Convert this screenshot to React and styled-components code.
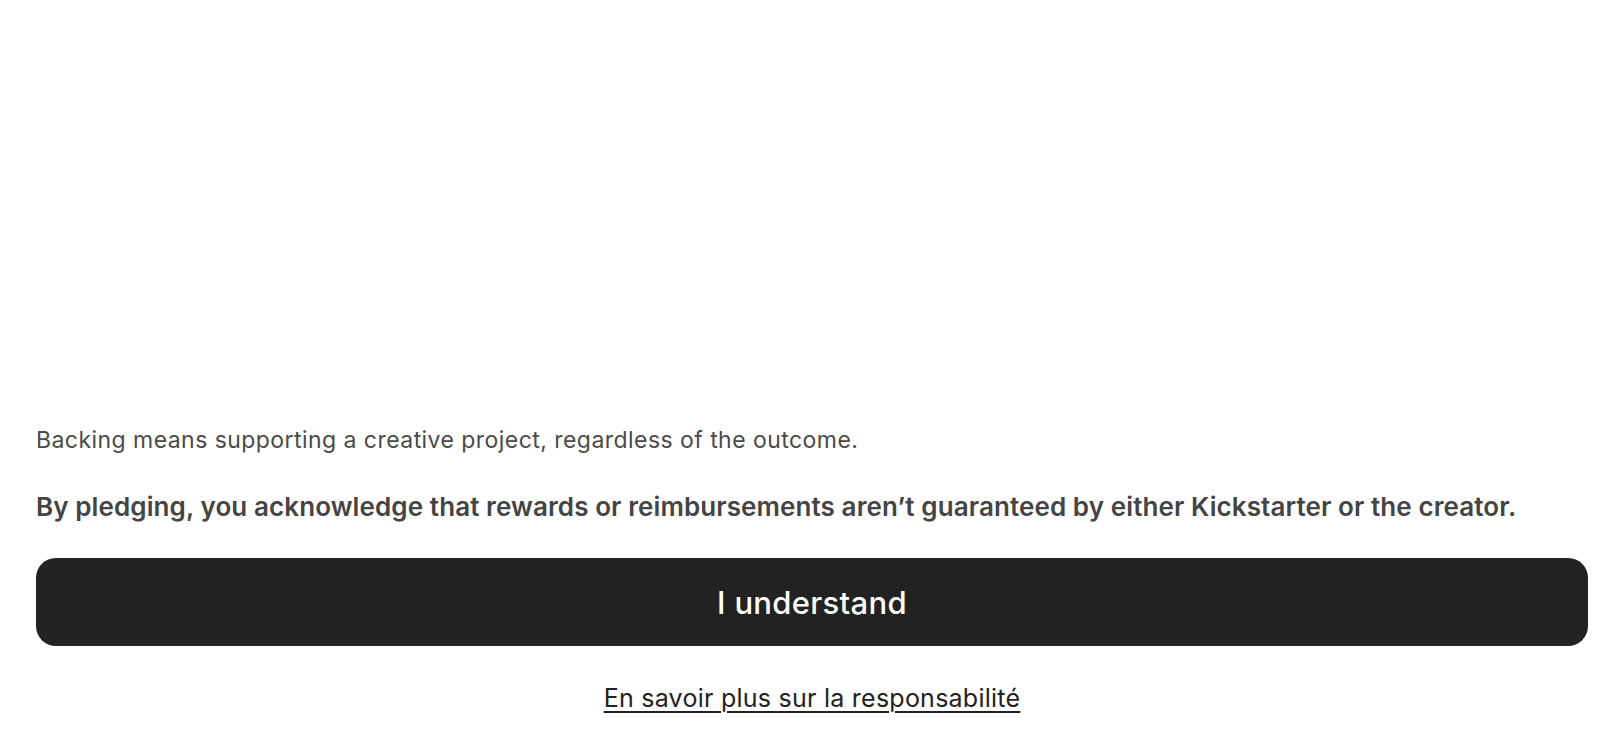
import React from 'react';
import styled, { createGlobalStyle } from 'styled-components';

const GlobalStyle = createGlobalStyle`
    html, body, #root {
        margin: 0;
        height: 100%;
    }
    body {
        background: #fff;
        font-family: Inter, "Noto Sans", "Liberation Sans", sans-serif;
        -webkit-font-smoothing: antialiased;
    }
`;

export default function App() {
    return (
        <>
            <GlobalStyle />
            <Page>
                <Notice>
                    <Intro>Backing means supporting a creative project, regardless of the outcome.</Intro>
                    <Warning>
                        By pledging, you acknowledge that rewards or reimbursements aren’t guaranteed by either Kickstarter or the creator.
                    </Warning>
                    <PrimaryButton type="button">I understand</PrimaryButton>
                    <LearnMore href="#">En savoir plus sur la responsabilité</LearnMore>
                </Notice>
            </Page>
        </>
    );
}

const Page = styled.div`
    height: 100%;
    display: flex;
    flex-direction: column;
    justify-content: flex-end;
    box-sizing: border-box;
    padding: 0 36px 36px;
`;

const Notice = styled.div`
    display: flex;
    flex-direction: column;
`;

const Intro = styled.p`
    margin: 0;
    font-size: 23px;
    line-height: 32px;
    letter-spacing: 0.45px;
    color: #4a4a4a;
`;

const Warning = styled.p`
    margin: 34px 0 0;
    font-size: 26px;
    line-height: 34px;
    letter-spacing: 0.1px;
    font-weight: 600;
    color: #444;
`;

const PrimaryButton = styled.button`
    margin-top: 34px;
    height: 88px;
    border: none;
    border-radius: 20px;
    background: #222;
    color: #fff;
    font-family: inherit;
    font-size: 31px;
    letter-spacing: 0.3px;
    font-weight: 500;
    cursor: pointer;
`;

const LearnMore = styled.a`
    align-self: center;
    margin-top: 36px;
    font-size: 25px;
    line-height: 32px;
    letter-spacing: 0.25px;
    color: #222;
    text-decoration: underline;
    text-underline-offset: 4px;
    text-decoration-thickness: 2px;
`;
